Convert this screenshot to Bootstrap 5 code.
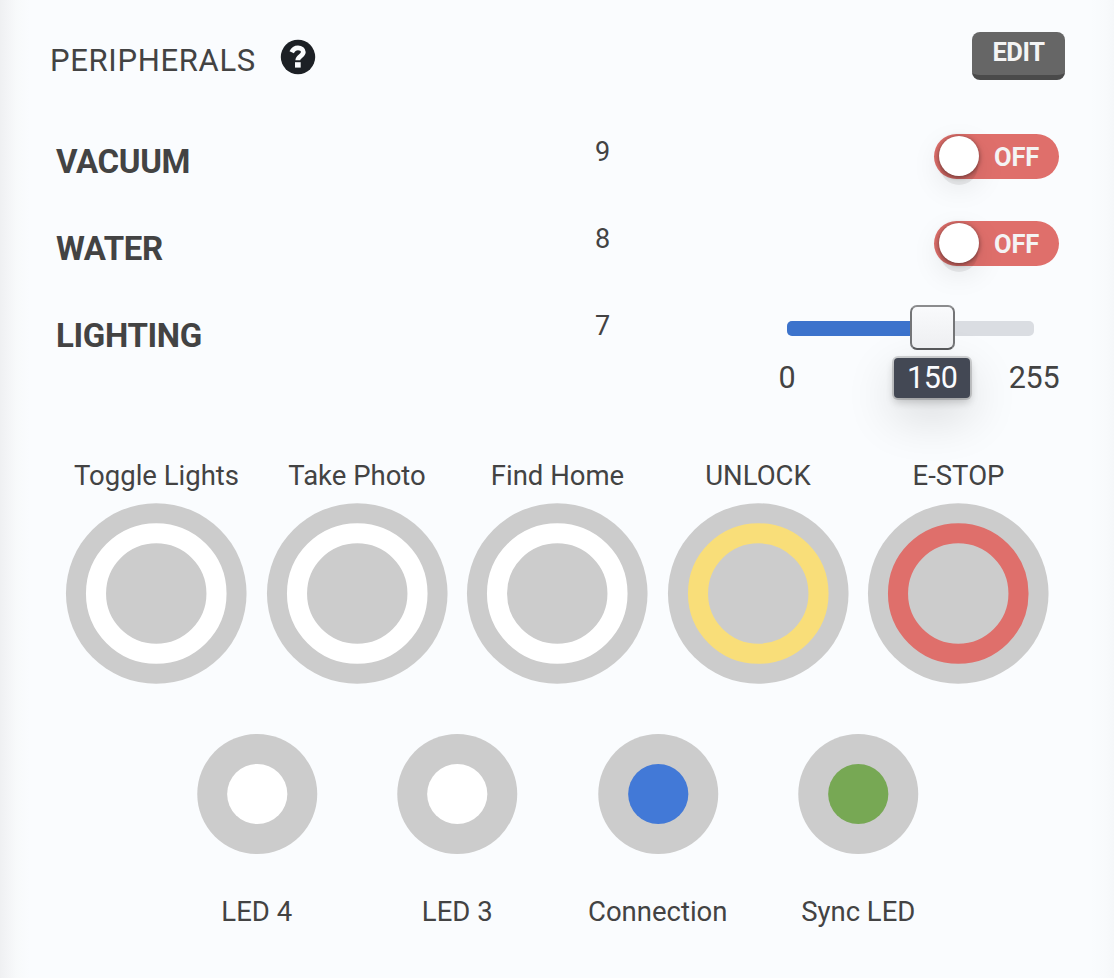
<!DOCTYPE html>
<html lang="en">
<head>
<meta charset="utf-8">
<meta name="viewport" content="width=device-width, initial-scale=1">
<title>Peripherals</title>
<link href="https://cdn.jsdelivr.net/npm/bootstrap@5.3.0/dist/css/bootstrap.min.css" rel="stylesheet">
<style>
body{font-family:Roboto,"Liberation Sans",sans-serif;color:#434343;background:#fafcfe}
.panel{height:978px;overflow:hidden;background:linear-gradient(90deg,#eff0f2 0,#f3f4f6 7px,#f8fafb 17px,#fafcfe 30px,#fafcfe 1090px,#f8fafc 1106px,#f5f7f9 1114px);padding:32px 49px 0 50px}
.panel-head{height:81px}
.panel-title{font-size:31px;line-height:36px;letter-spacing:.68px;font-weight:400;margin:11px 0 0;width:205px;white-space:nowrap}
.help{margin:7px 0 0 25px}
.btn-edit{width:93px;height:48px;padding:0;background:#666!important;border:0;border-radius:8px;border-bottom:5px solid #4a4a4a!important;color:#f4f4f4!important;font-weight:700;font-size:25.5px;letter-spacing:-.4px;line-height:38px;display:block;box-shadow:none}
.btn-edit span{display:block;height:43px;line-height:41px}
.dev{height:87px;padding:0 6px}
.dev-name{font-size:33px;line-height:40px;font-weight:700;letter-spacing:-.35px;margin:29px 0 0;width:444px}
.dev-pin{font-size:27px;line-height:32px;margin-top:23px;width:205px;text-align:center}
.switch{width:125px;height:45px;border-radius:23px;background:#df6f6b;color:#f4f4f4;border:0;margin-top:21px;padding:0 20px 1px 5px;font-weight:700;font-size:25.5px;line-height:44px;letter-spacing:-.2px}
.switch-text{padding-top:2px}
.knob{width:40px;height:40px;border-radius:50%;background:#fff;box-shadow:0 1px 5px rgba(0,0,0,.5),0 10px 0 -1px rgba(0,0,0,.07),0 10px 30px rgba(0,0,0,.1)}
.slider{width:247px;height:15px;border-radius:5px;background:#dadde2;margin:34px 25px 0 0}
.slider-fill{height:15px;border-radius:5px 0 0 5px;background:#3c73cc}
.handle{top:-16px;width:45px;height:45px;margin-left:-22.500px;border:2px solid #747577;border-top-color:#8b8c8e;border-bottom-color:#57585a;border-radius:7px;background:linear-gradient(#f9fafc,#eeeff1)}
.tip{top:37px;width:76px;height:40px;margin-left:-38px;border-radius:4px;background:#434854;color:#fafbfe;font-size:30.5px;letter-spacing:-.3px;line-height:39px;text-align:center;box-shadow:0 0 0 2px rgba(0,0,0,.15),0 4px 8px rgba(0,0,0,.2),0 17px 50px rgba(0,0,0,.16)}
.tick{top:37px;width:80px;margin-left:-40px;font-size:30.5px;letter-spacing:-.3px;line-height:39px;text-align:center}
.controls{margin:86px 0 0 6.25px;width:1002.5px}
.ctl{width:200.5px}
.ctl-label{font-size:27.5px;line-height:32px;white-space:nowrap}
.ctl svg{display:block}
.leds{margin:42px 0 0 106.5px;width:802px}
.leds .ctl-label{margin-top:42px}
</style>
</head>
<body>
<main class="panel">
  <header class="panel-head d-flex align-items-start">
    <h1 class="panel-title">PERIPHERALS</h1>
    <svg class="help" width="36" height="36" viewBox="0 0 36 36" aria-label="Help"><circle cx="18" cy="18" r="17.200" fill="#1c2025"/><path d="M11.700 13.300C13.100 10.200 15.100 8.800 18 8.800c3.100 0 5.300 1.900 5.300 4.300 0 4.100-5.500 3.900-5.500 8.200" fill="none" stroke="#fafcfe" stroke-width="4.800"/><path d="M15 23.200h5.700v5.400H15z" fill="#fafcfe"/></svg>
    <button type="button" class="btn btn-edit ms-auto"><span>EDIT</span></button>
  </header>

  <section class="dev d-flex align-items-start">
    <h2 class="dev-name">VACUUM</h2><div class="dev-pin">9</div>
    <button type="button" class="switch ms-auto d-flex align-items-center justify-content-between"><span class="knob"></span><span class="switch-text">OFF</span></button>
  </section>
  <section class="dev d-flex align-items-start">
    <h2 class="dev-name">WATER</h2><div class="dev-pin">8</div>
    <button type="button" class="switch ms-auto d-flex align-items-center justify-content-between"><span class="knob"></span><span class="switch-text">OFF</span></button>
  </section>
  <section class="dev d-flex align-items-start">
    <h2 class="dev-name">LIGHTING</h2><div class="dev-pin">7</div>
    <div class="slider ms-auto position-relative">
      <div class="slider-fill" style="width:58.8%"></div>
      <span class="tick position-absolute" style="left:0">0</span>
      <span class="tick position-absolute" style="left:100%">255</span>
      <span class="tip position-absolute" style="left:58.8%">150</span>
      <span class="handle position-absolute" style="left:58.8%"></span>
    </div>
  </section>

  <section class="controls d-flex text-center">
    <div class="ctl"><div class="ctl-label">Toggle Lights</div><svg width="200.5" height="200" viewBox="0 0 200.5 200"><circle cx="100.25" cy="101.500" r="90.300" fill="#ccc"/><circle cx="100.25" cy="101.500" r="60.250" fill="none" stroke="#fff" stroke-width="20.100"/></svg></div>
    <div class="ctl"><div class="ctl-label">Take Photo</div><svg width="200.5" height="200" viewBox="0 0 200.5 200"><circle cx="100.25" cy="101.500" r="90.300" fill="#ccc"/><circle cx="100.25" cy="101.500" r="60.250" fill="none" stroke="#fff" stroke-width="20.100"/></svg></div>
    <div class="ctl"><div class="ctl-label">Find Home</div><svg width="200.5" height="200" viewBox="0 0 200.5 200"><circle cx="100.25" cy="101.500" r="90.300" fill="#ccc"/><circle cx="100.25" cy="101.500" r="60.250" fill="none" stroke="#fff" stroke-width="20.100"/></svg></div>
    <div class="ctl"><div class="ctl-label">UNLOCK</div><svg width="200.5" height="200" viewBox="0 0 200.5 200"><circle cx="100.25" cy="101.500" r="90.300" fill="#ccc"/><circle cx="100.25" cy="101.500" r="60.250" fill="none" stroke="#f9de79" stroke-width="20.100"/></svg></div>
    <div class="ctl"><div class="ctl-label">E-STOP</div><svg width="200.5" height="200" viewBox="0 0 200.5 200"><circle cx="100.25" cy="101.500" r="90.300" fill="#ccc"/><circle cx="100.25" cy="101.500" r="60.250" fill="none" stroke="#df6f6b" stroke-width="20.100"/></svg></div>
  </section>

  <section class="leds d-flex text-center">
    <div class="ctl"><svg width="200.5" height="120" viewBox="0 0 200.5 120"><circle cx="100.25" cy="60" r="60" fill="#ccc"/><circle cx="100.25" cy="60" r="30.100" fill="#fff"/></svg><div class="ctl-label">LED 4</div></div>
    <div class="ctl"><svg width="200.5" height="120" viewBox="0 0 200.5 120"><circle cx="100.25" cy="60" r="60" fill="#ccc"/><circle cx="100.25" cy="60" r="30.100" fill="#fff"/></svg><div class="ctl-label">LED 3</div></div>
    <div class="ctl"><svg width="200.5" height="120" viewBox="0 0 200.5 120"><circle cx="100.25" cy="60" r="60" fill="#ccc"/><circle cx="100.25" cy="60" r="30.100" fill="#4279d7"/></svg><div class="ctl-label">Connection</div></div>
    <div class="ctl"><svg width="200.5" height="120" viewBox="0 0 200.5 120"><circle cx="100.25" cy="60" r="60" fill="#ccc"/><circle cx="100.25" cy="60" r="30.100" fill="#77a854"/></svg><div class="ctl-label">Sync LED</div></div>
  </section>
</main>
<script src="https://cdn.jsdelivr.net/npm/bootstrap@5.3.0/dist/js/bootstrap.bundle.min.js"></script>
</body>
</html>
